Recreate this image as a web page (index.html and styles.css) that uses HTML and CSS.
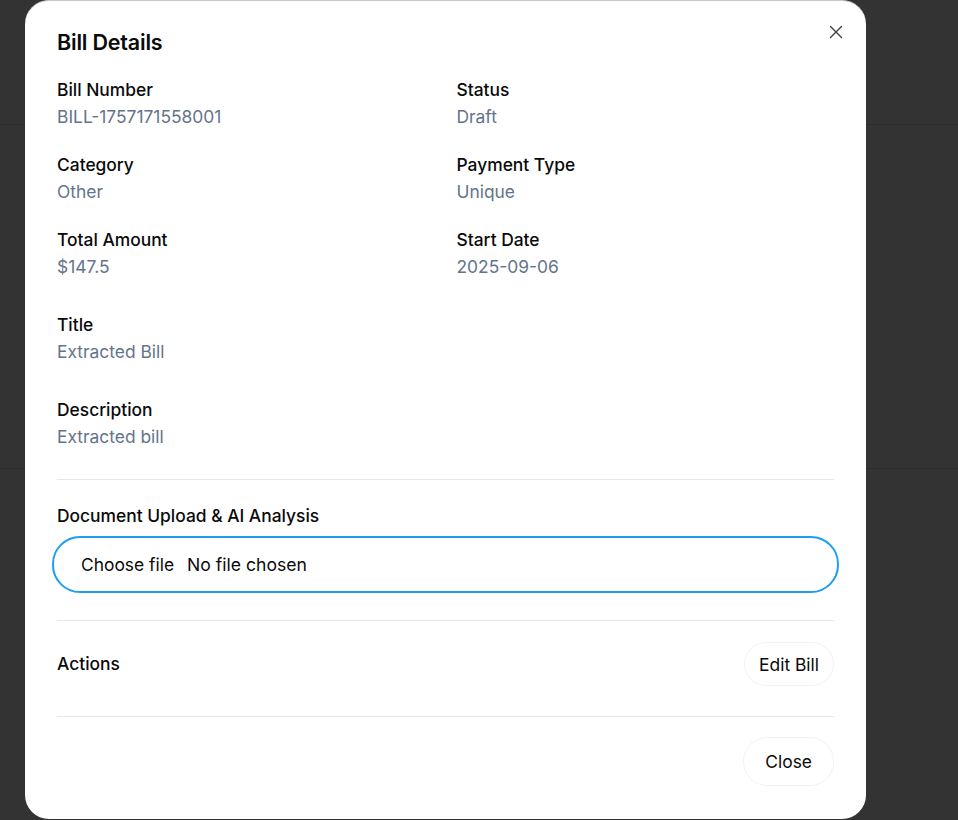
FILE: index.html
```html
<!DOCTYPE html>
<html lang="en">
<head>
<meta charset="utf-8">
<title>Bill Details</title>
<link rel="stylesheet" href="styles.css">
</head>
<body>
<div class="backdrop">
  <div class="bg-line bg-line-1"></div>
  <div class="bg-line bg-line-2"></div>
  <div class="modal">
    <button class="close-x" aria-label="Close">
      <svg width="14" height="14" viewBox="0 0 14 14"><path d="M1.5 1.5 L12.5 12.5 M12.5 1.5 L1.5 12.5" stroke="#3f3f46" stroke-width="1.4" stroke-linecap="round" fill="none"/></svg>
    </button>
    <h2 class="title">Bill Details</h2>
    <div class="grid">
      <div class="field"><div class="label">Bill Number</div><div class="value">BILL-1757171558001</div></div>
      <div class="field"><div class="label">Status</div><div class="value">Draft</div></div>
      <div class="field"><div class="label">Category</div><div class="value">Other</div></div>
      <div class="field"><div class="label">Payment Type</div><div class="value">Unique</div></div>
      <div class="field"><div class="label">Total Amount</div><div class="value">$147.5</div></div>
      <div class="field"><div class="label">Start Date</div><div class="value">2025-09-06</div></div>
    </div>
    <div class="field block"><div class="label">Title</div><div class="value">Extracted Bill</div></div>
    <div class="field block"><div class="label">Description</div><div class="value">Extracted bill</div></div>
    <div class="section upload">
      <div class="label">Document Upload &amp; AI Analysis</div>
      <div class="file-input"><span class="file-btn">Choose file</span><span class="file-name">No file chosen</span></div>
    </div>
    <div class="section actions">
      <div class="label">Actions</div>
      <button class="btn edit">Edit Bill</button>
    </div>
    <div class="section footer">
      <button class="btn close">Close</button>
    </div>
  </div>
</div>
</body>
</html>
```
FILE: styles.css
```css
* { box-sizing: border-box; }
html, body { margin: 0; padding: 0; }
body {
  font-family: Inter, "Noto Sans", sans-serif;
  background: #333333;
  width: 958px;
  height: 820px;
  overflow: hidden;
}
.backdrop {
  position: relative;
  width: 958px;
  height: 820px;
  background: #333333;
}
.bg-line {
  position: absolute;
  left: 0;
  right: 0;
  height: 1px;
  background: #2d2d2d;
}
.bg-line-1 { top: 124px; }
.bg-line-2 { top: 468px; }
.modal {
  position: relative;
  margin-left: 25px;
  width: 841px;
  height: 819px;
  background: #ffffff;
  border-top: 1px solid #c4cad1;
  border-radius: 24px;
  padding: 25px 32px 0 32px;
  color: #0a0a0a;
}
.close-x {
  position: absolute;
  top: 23px;
  right: 22px;
  width: 16px;
  height: 16px;
  padding: 0;
  border: 0;
  background: none;
  display: flex;
  align-items: center;
  justify-content: center;
}
.title {
  margin: 0;
  font-size: 21.5px;
  line-height: 32px;
  font-weight: 600;
  color: #0a0a0a;
  letter-spacing: -0.2px;
}
.grid {
  margin-top: 20px;
  display: grid;
  grid-template-columns: 1fr 1fr;
  column-gap: 22px;
  row-gap: 24px;
}
.field { display: flex; flex-direction: column; gap: 3px; }
.label {
  font-size: 17.4px;
  line-height: 24px;
  font-weight: 500;
  color: #0a0a0a;
}
.value {
  font-size: 17.4px;
  line-height: 24px;
  color: #64748b;
}
.block { margin-top: 34px; }
.section {
  border-top: 1px solid #e5e9ef;
}
.upload {
  margin-top: 30px;
  padding-top: 24px;
}
.file-input {
  margin: 8px -5px 0 -5px;
  height: 57px;
  border: 2px solid #1d9ff0;
  border-radius: 28px;
  display: flex;
  align-items: center;
  padding-left: 27px;
  font-size: 17.4px;
}
.file-btn { color: #0a0a0a; margin-right: 13px; }
.file-name { font-size: 17.6px; color: #0a0a0a; }
.actions {
  margin-top: 27px;
  padding-top: 21px;
  padding-bottom: 30px;
  display: flex;
  justify-content: space-between;
  align-items: center;
}
.btn {
  font-family: Inter, "Noto Sans", sans-serif;
  font-size: 17.4px;
  color: #0a0a0a;
  background: #ffffff;
  border: 1px solid #f1f3f6;
  border-radius: 24px;
  cursor: pointer;
}
.edit {
  height: 44px;
  padding: 0 14px;
}
.footer {
  padding-top: 20px;
  display: flex;
  justify-content: flex-end;
}
.close {
  height: 49px;
  padding: 0 21px;
}
```
